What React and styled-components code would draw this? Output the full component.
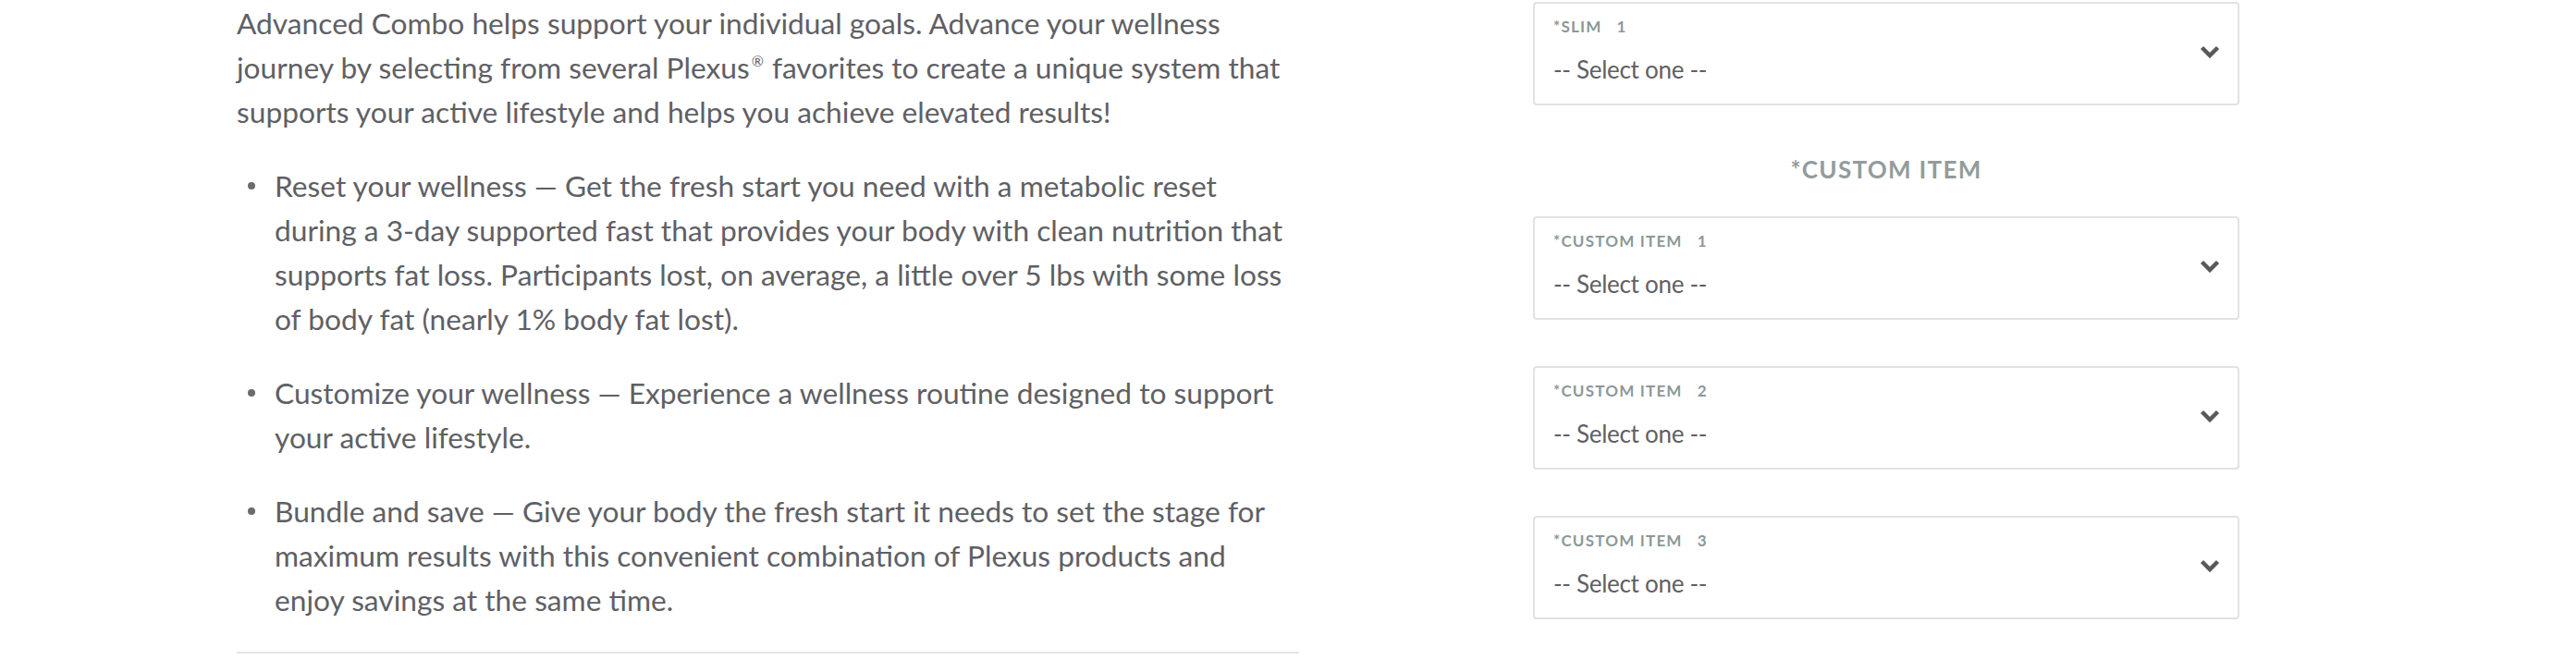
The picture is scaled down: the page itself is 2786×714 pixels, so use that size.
import React from 'react';
import styled, { createGlobalStyle } from 'styled-components';

const GlobalStyle = createGlobalStyle`
  html, body {
    margin: 0;
    padding: 0;
    background: #ffffff;
  }
  body {
    font-family: Lato, "Open Sans", sans-serif;
    color: #5f6064;
  }
`;

const Page = styled.div`
  display: flex;
  align-items: flex-start;
  gap: 253px;
  padding: 1px 0 0 256px;
`;

const Description = styled.div`
  width: 1149px;
  flex: 0 0 1149px;
`;

const Intro = styled.p`
  margin: 0;
  font-size: 31.7px;
  line-height: 48px;
`;

const Mark = styled.sup`
  display: inline-block;
  font-size: 0.5em;
  line-height: 1;
  margin: 0 1px 0 2px;
  vertical-align: 0.8em;
`;

const Benefits = styled.ul`
  list-style: none;
  margin: 32px 0 0;
  padding: 0;
`;

const Benefit = styled.li`
  display: grid;
  grid-template-columns: 41px 1fr;
  margin-bottom: 32px;
  font-size: 31.7px;
  line-height: 48px;

  &::before {
    content: '';
    width: 8px;
    height: 8px;
    margin: 20px 0 0 12px;
    border-radius: 50%;
    background: #6a6b6f;
  }
`;

const Divider = styled.hr`
  margin: 0;
  border: 0;
  border-top: 2px solid #e4e4e4;
`;

const Options = styled.div`
  width: 764px;
  flex: 0 0 764px;
  padding-top: 1px;
  display: flex;
  flex-direction: column;
  gap: 50px;
`;

const Group = styled.div`
  display: flex;
  flex-direction: column;
  gap: 31px;
`;

const GroupTitle = styled.div`
  text-align: center;
  font-size: 26px;
  line-height: 40px;
  font-weight: 700;
  letter-spacing: 1.3px;
  color: #939c9b;
  margin-top: -1px;
`;

const Field = styled.label`
  box-sizing: border-box;
  height: 112px;
  border: 2px solid #e2e2e2;
  border-radius: 4px;
  padding: 13px 19px 0 20px;
  display: flex;
  align-items: center;
  justify-content: space-between;
`;

const FieldText = styled.div`
  display: flex;
  flex-direction: column;
  gap: 16px;
  align-self: flex-start;
`;

const FieldLabel = styled.span`
  font-size: 17px;
  line-height: 24px;
  font-weight: 700;
  letter-spacing: 1.2px;
  color: #8c9897;
  text-transform: uppercase;
`;

const Index = styled.span`
  margin-left: 16px;
`;

const Placeholder = styled.span`
  font-size: 26px;
  line-height: 36px;
  color: #5f6064;
  letter-spacing: -0.3px;
`;

const Chevron = styled.svg`
  width: 22px;
  height: 14px;
  margin-top: -17px;
`;

const SelectField = ({ label, index }) => (
  <Field>
    <FieldText>
      <FieldLabel>
        {label}
        <Index>{index}</Index>
      </FieldLabel>
      <Placeholder>-- Select one --</Placeholder>
    </FieldText>
    <Chevron viewBox="0 0 22 14">
      <polyline points="2.5,2.5 11,11 19.5,2.5" fill="none" stroke="#58595c" strokeWidth="4.5" />
    </Chevron>
  </Field>
);

const benefits = [
  'Reset your wellness \u2014 Get the fresh start you need with a metabolic reset during a 3-day supported fast that provides your body with clean nutrition that supports fat loss. Participants lost, on average, a little over 5 lbs with some loss of body fat (nearly 1% body fat lost).',
  'Customize your wellness \u2014 Experience a wellness routine designed to support your active lifestyle.',
  'Bundle and save \u2014 Give your body the fresh start it needs to set the stage for maximum results with this convenient combination of Plexus products and enjoy savings at the same time.',
];

const App = () => (
  <>
    <GlobalStyle />
    <Page>
      <Description>
        <Intro>
          Advanced Combo helps support your individual goals. Advance your wellness journey by selecting from several Plexus<Mark>&reg;</Mark> favorites to create a unique system that supports your active lifestyle and helps you achieve elevated results!
        </Intro>
        <Benefits>
          {benefits.map((text) => (
            <Benefit key={text}>{text}</Benefit>
          ))}
        </Benefits>
        <Divider />
      </Description>
      <Options>
        <SelectField label="*Slim" index={1} />
        <Group>
          <GroupTitle>*CUSTOM ITEM</GroupTitle>
          <SelectField label="*Custom Item" index={1} />
        </Group>
        <SelectField label="*Custom Item" index={2} />
        <SelectField label="*Custom Item" index={3} />
      </Options>
    </Page>
  </>
);

export default App;
